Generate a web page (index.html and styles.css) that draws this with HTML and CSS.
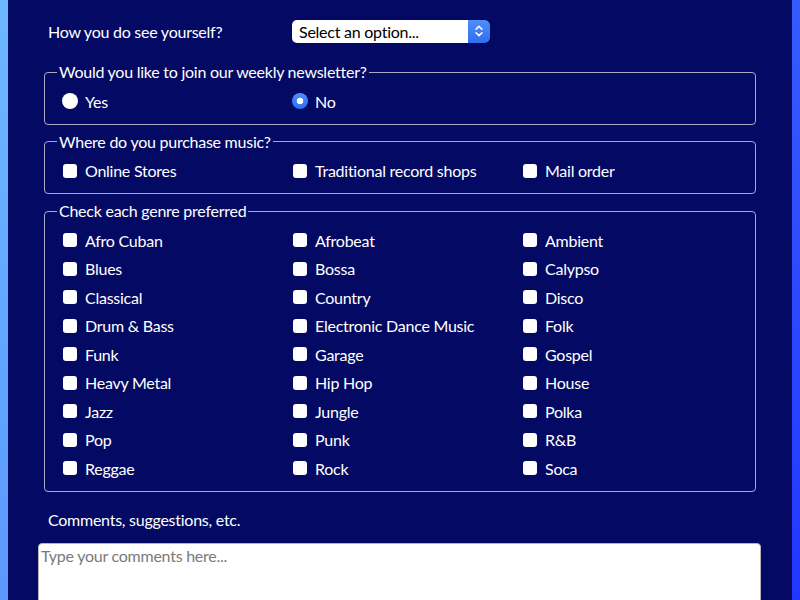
FILE: index.html
```html
<!DOCTYPE html>
<html lang="en">
<head>
<meta charset="utf-8">
<title>Survey</title>
<link rel="stylesheet" href="styles.css">
</head>
<body>
<form class="survey">
  <div class="row-select">
    <label class="q-label" for="role">How you do see yourself?</label>
    <span class="select-wrap">
      <select id="role" class="select"><option>Select an option...</option></select>
      <span class="select-arrow">
        <svg width="10" height="14" viewBox="0 0 10 14"><path d="M2 5.2 L5 2.4 L8 5.2 M2 8.8 L5 11.6 L8 8.8" fill="none" stroke="#fff" stroke-width="1.5" stroke-linecap="round" stroke-linejoin="round"/></svg>
      </span>
    </span>
  </div>

  <fieldset class="group">
    <legend>Would you like to join our weekly newsletter?</legend>
    <div class="options">
      <label class="opt"><input type="radio" name="news" class="radio"><span>Yes</span></label>
      <label class="opt"><input type="radio" name="news" class="radio" checked><span>No</span></label>
    </div>
  </fieldset>

  <fieldset class="group">
    <legend>Where do you purchase music?</legend>
    <div class="options">
      <label class="opt"><input type="checkbox" class="check"><span>Online Stores</span></label>
      <label class="opt"><input type="checkbox" class="check"><span>Traditional record shops</span></label>
      <label class="opt"><input type="checkbox" class="check"><span>Mail order</span></label>
    </div>
  </fieldset>

  <fieldset class="group">
    <legend>Check each genre preferred</legend>
    <div class="options">
      <label class="opt"><input type="checkbox" class="check"><span>Afro Cuban</span></label>
      <label class="opt"><input type="checkbox" class="check"><span>Afrobeat</span></label>
      <label class="opt"><input type="checkbox" class="check"><span>Ambient</span></label>
      <label class="opt"><input type="checkbox" class="check"><span>Blues</span></label>
      <label class="opt"><input type="checkbox" class="check"><span>Bossa</span></label>
      <label class="opt"><input type="checkbox" class="check"><span>Calypso</span></label>
      <label class="opt"><input type="checkbox" class="check"><span>Classical</span></label>
      <label class="opt"><input type="checkbox" class="check"><span>Country</span></label>
      <label class="opt"><input type="checkbox" class="check"><span>Disco</span></label>
      <label class="opt"><input type="checkbox" class="check"><span>Drum &amp; Bass</span></label>
      <label class="opt"><input type="checkbox" class="check"><span>Electronic Dance Music</span></label>
      <label class="opt"><input type="checkbox" class="check"><span>Folk</span></label>
      <label class="opt"><input type="checkbox" class="check"><span>Funk</span></label>
      <label class="opt"><input type="checkbox" class="check"><span>Garage</span></label>
      <label class="opt"><input type="checkbox" class="check"><span>Gospel</span></label>
      <label class="opt"><input type="checkbox" class="check"><span>Heavy Metal</span></label>
      <label class="opt"><input type="checkbox" class="check"><span>Hip Hop</span></label>
      <label class="opt"><input type="checkbox" class="check"><span>House</span></label>
      <label class="opt"><input type="checkbox" class="check"><span>Jazz</span></label>
      <label class="opt"><input type="checkbox" class="check"><span>Jungle</span></label>
      <label class="opt"><input type="checkbox" class="check"><span>Polka</span></label>
      <label class="opt"><input type="checkbox" class="check"><span>Pop</span></label>
      <label class="opt"><input type="checkbox" class="check"><span>Punk</span></label>
      <label class="opt"><input type="checkbox" class="check"><span>R&amp;B</span></label>
      <label class="opt"><input type="checkbox" class="check"><span>Reggae</span></label>
      <label class="opt"><input type="checkbox" class="check"><span>Rock</span></label>
      <label class="opt"><input type="checkbox" class="check"><span>Soca</span></label>
    </div>
  </fieldset>

  <label class="comments-label" for="comments">Comments, suggestions, etc.</label>
  <textarea id="comments" class="comments" placeholder="Type your comments here..."></textarea>
</form>
</body>
</html>
```

FILE: styles.css
```css
html, body {
  margin: 0;
  height: 100%;
}
body {
  background: linear-gradient(115deg, #6cb8ff 0%, #4a7cff 50%, #2236ff 100%);
  font-family: Lato, "Open Sans", sans-serif;
  font-size: 16px;
  letter-spacing: -0.25px;
  color: #fff;
  overflow: hidden;
}
.survey {
  margin: 0 8px;
  background: #040a63;
  min-height: 600px;
  padding: 19px 31px 0 30px;
  box-sizing: border-box;
}
.row-select {
  display: flex;
  align-items: center;
  height: 24px;
  padding-left: 10px;
}
.q-label {
  width: 244px;
}
.select-wrap {
  display: inline-flex;
  height: 23px;
  width: 198px;
  border-radius: 5px;
  overflow: hidden;
  box-shadow: 0 0 0 0.5px rgba(0,0,0,0.3);
}
.select {
  appearance: none;
  -webkit-appearance: none;
  flex: 1;
  min-width: 0;
  border: 0;
  margin: 0;
  background: #fff;
  color: #000;
  font: inherit;
  letter-spacing: inherit;
  padding: 0 0 0 7px;
  height: 23px;
  line-height: 23px;
}
.select-arrow {
  width: 22px;
  display: flex;
  align-items: center;
  justify-content: center;
  background: linear-gradient(#4d8ff8, #2f6ef0);
  border-radius: 0 5px 5px 0;
}
.group {
  margin: 19px 5px 0 6px;
  padding: 5px 12px 8px;
  border: 1px solid #a9a9c4;
  border-radius: 4px;
  min-width: 0;
}
.group + .group {
  margin-top: 7px;
}
.group legend {
  padding: 0 2px;
  line-height: 20px;
}
.options {
  display: grid;
  grid-template-columns: 230px 230px 1fr;
  grid-auto-rows: 28.5px;
}
.opt {
  display: flex;
  align-items: center;
  padding-left: 5px;
}
.check {
  appearance: none;
  -webkit-appearance: none;
  width: 14px;
  height: 14px;
  margin: 0 8px 0 1px;
  background: #fff;
  border-radius: 3px;
}
.radio {
  appearance: none;
  -webkit-appearance: none;
  width: 16px;
  height: 16px;
  margin: 0 7px 0 0;
  background: #fff;
  border-radius: 50%;
}
.radio:checked {
  background: radial-gradient(circle, #fff 0 3px, transparent 3.6px), linear-gradient(#4f91f9, #2c6ef0);
}
.comments-label {
  display: block;
  padding-left: 10px;
  margin-top: 18px;
  line-height: 20px;
}
.comments {
  display: block;
  box-sizing: border-box;
  width: 100%;
  height: 120px;
  margin-top: 13px;
  border: 1px solid #b5b5b5;
  border-radius: 4px;
  padding: 2px 2px;
  font: inherit;
  letter-spacing: inherit;
  color: #000;
  background: #fff;
  resize: none;
}
.comments::placeholder {
  color: #7a7a7a;
}
```
